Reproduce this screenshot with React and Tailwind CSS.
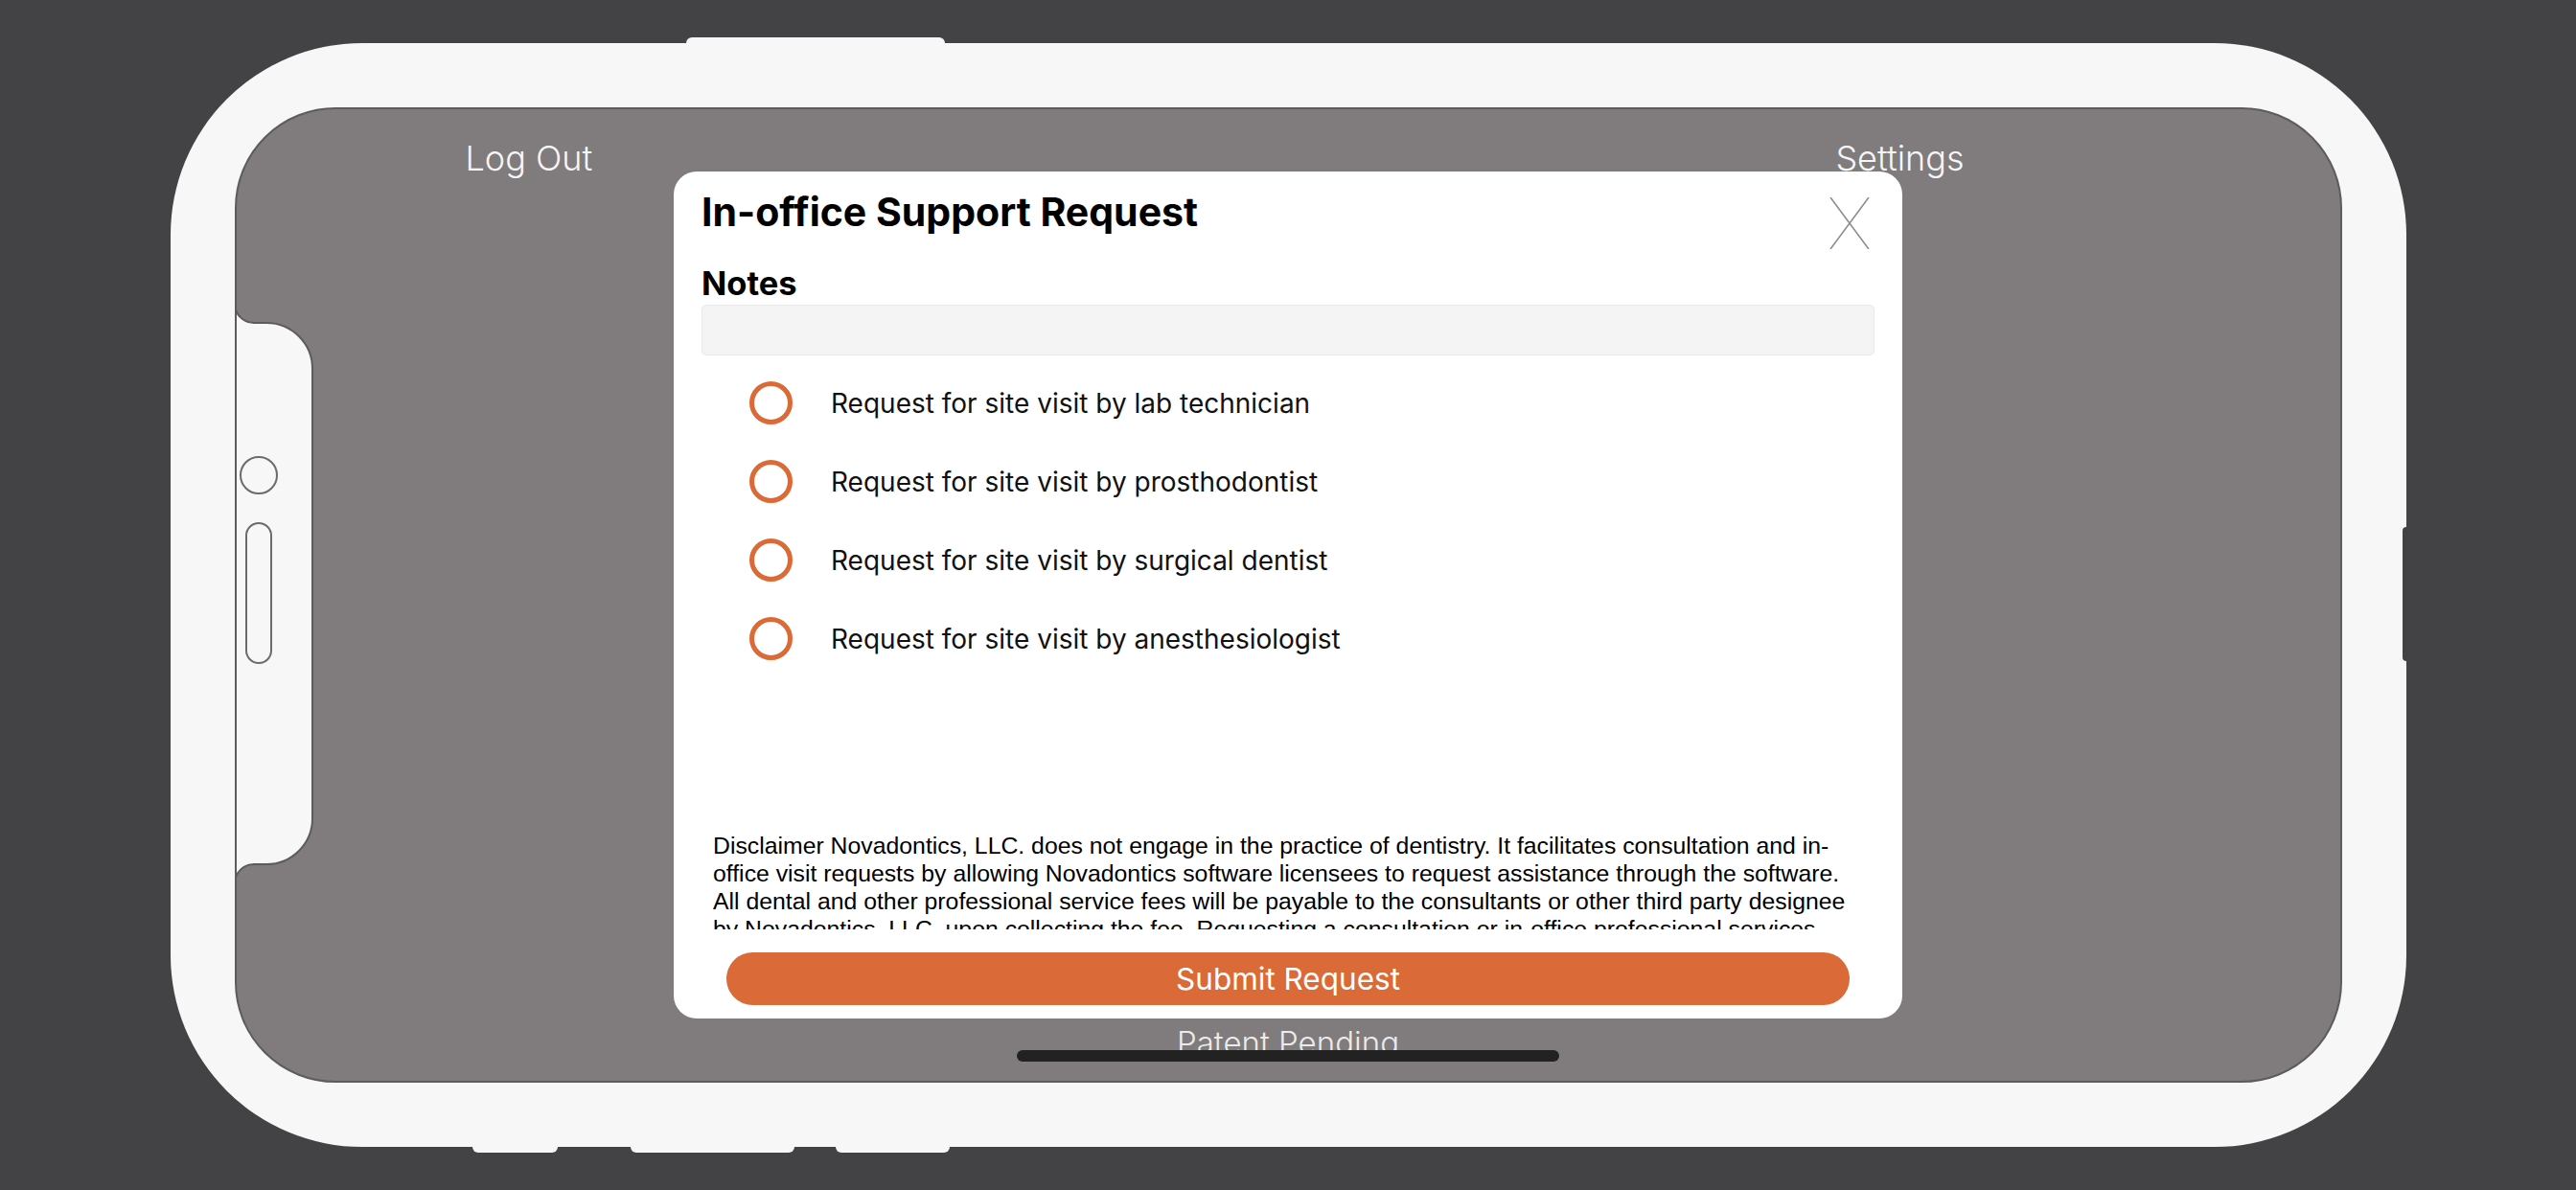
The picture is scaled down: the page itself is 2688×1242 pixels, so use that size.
import React from 'react'

const options = [
  'Request for site visit by lab technician',
  'Request for site visit by prosthodontist',
  'Request for site visit by surgical dentist',
  'Request for site visit by anesthesiologist',
]

// disclaimer broken the way the app shows it
const disclaimer = [
  'Disclaimer Novadontics, LLC. does not engage in the practice of dentistry. It facilitates consultation and in-',
  'office visit requests by allowing Novadontics software licensees to request assistance through the software.',
  'All dental and other professional service fees will be payable to the consultants or other third party designee',
  'by Novadontics, LLC. upon collecting the fee. Requesting a consultation or in-office professional services',
]

function Radio({ label }) {
  return (
    <div className="h-[82px] flex items-center pl-[50px]">
      <span className="w-[45px] h-[45px] rounded-full border-[5px] border-[#dc6a36] shrink-0" />
      <span className="ml-[40px] text-[28px] leading-none text-[#111]">{label}</span>
    </div>
  )
}

function Notch() {
  // side cut-out of the phone screen with camera + speaker
  const edge = 'M0,0 A20,20 0 0 0 20,20 L33,20 A48,48 0 0 1 81,68 L81,537 A48,48 0 0 1 33,585 L20,585 A20,20 0 0 0 0,605'
  return (
    <svg className="absolute left-[-2px] top-[203px]" width="84" height="605" viewBox="0 0 84 605">
      <path d={edge + ' Z'} fill="#f7f7f7" />
      <path d={edge} fill="none" stroke="#5c5c5c" strokeWidth="2" />
      <circle cx="25" cy="179" r="19" fill="none" stroke="#6b6b6b" strokeWidth="2" />
      <rect x="12" y="229" width="26" height="146" rx="13" fill="none" stroke="#6b6b6b" strokeWidth="2" />
    </svg>
  )
}

function SupportModal() {
  return (
    <div className="absolute left-1/2 -translate-x-1/2 top-[65px] w-[1282px] h-[884px] bg-white rounded-[24px] flex flex-col px-[29px] pt-[22px] pb-[14px]">
      <div className="flex items-start justify-between">
        <h1 className="text-[41px] leading-none font-bold text-black">In-office Support Request</h1>
        <svg className="mt-[5px] mr-[5px]" width="42" height="54" viewBox="0 0 42 54">
          <path d="M1 0 L41 54 M41 0 L1 54" stroke="#8d8d8d" strokeWidth="1.6" />
        </svg>
      </div>
      <h2 className="mt-[19px] text-[34.5px] leading-none font-bold text-black">Notes</h2>
      <div className="mt-[4px] h-[53px] rounded-[5px] bg-[#f4f4f4] border border-[#e9e9e9]" />
      <div className="mt-[9px] flex flex-col">
        {options.map((o) => (
          <Radio key={o} label={o} />
        ))}
      </div>
      <div className="mt-auto ml-[12px] h-[102px] overflow-hidden font-[family-name:'Liberation_Sans',Arial,sans-serif] text-[24.8px] leading-[29px] text-black">
        {disclaimer.map((l) => (
          <div key={l} className="whitespace-nowrap">{l}</div>
        ))}
      </div>
      <button className="mt-[24px] mx-[26px] h-[55px] rounded-full bg-[#da6a37] text-white text-[31.5px] leading-none">
        Submit Request
      </button>
    </div>
  )
}

export default function App() {
  return (
    <div className="w-[2688px] h-[1242px] bg-[#434345] flex items-center justify-center font-[family-name:Inter,sans-serif]">
      <div className="relative w-[2333px] h-[1152px] rounded-[200px] bg-[#f7f7f7] p-[67px]">
        <div className="absolute left-[538px] top-[-6px] w-[270px] h-[8px] rounded-t-[6px] bg-[#f7f7f7]" />
        <div className="absolute left-[315px] bottom-[-6px] w-[89px] h-[8px] rounded-b-[6px] bg-[#f7f7f7]" />
        <div className="absolute left-[480px] bottom-[-6px] w-[171px] h-[8px] rounded-b-[6px] bg-[#f7f7f7]" />
        <div className="absolute left-[694px] bottom-[-6px] w-[119px] h-[8px] rounded-b-[6px] bg-[#f7f7f7]" />
        <div className="absolute right-0 top-[505px] w-[4px] h-[140px] rounded-l-[4px] bg-[#434345]" />

        <div className="relative w-full h-full rounded-[105px] bg-[#807c7d] border-2 border-[#5c5c5c] overflow-hidden flex flex-col">
          <div className="flex pt-[33px] pl-[239px] pr-[392px] text-[36px] leading-none font-light text-[#f6f6f6]">
            <span>Log Out</span>
            <span className="ml-auto">Settings</span>
          </div>
          <div className="mt-auto pb-[23px] text-center text-[33px] leading-none font-light text-[#ebebeb]">
            Patent Pending
          </div>
          <Notch />
          <SupportModal />
          <div className="absolute bottom-[20px] left-1/2 -translate-x-1/2 w-[566px] h-[12px] rounded-full bg-[#222]" />
        </div>
      </div>
    </div>
  )
}
